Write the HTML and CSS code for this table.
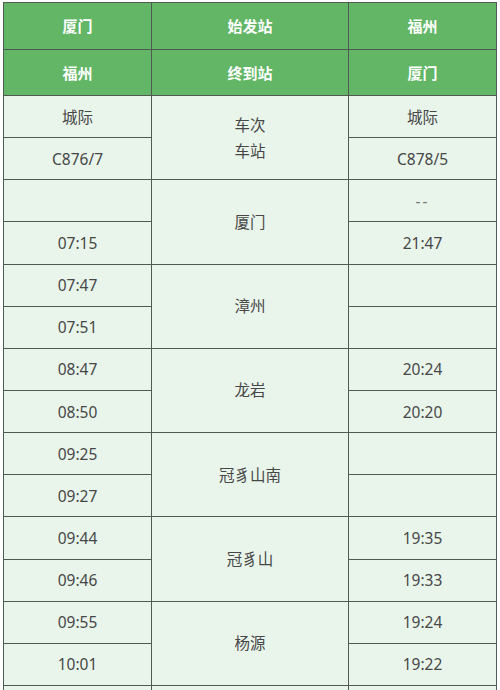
FILE: index.html
```html
<!DOCTYPE html>
<html lang="zh">
<head>
<meta charset="utf-8">
<link rel="stylesheet" href="styles.css">
</head>
<body>
<div class="wrap">
<table class="tt">
  <colgroup><col class="c1"><col class="c2"><col class="c3"></colgroup>
  <thead>
    <tr class="hr"><th>厦门</th><th>始发站</th><th>福州</th></tr>
    <tr class="hr"><th>福州</th><th>终到站</th><th>厦门</th></tr>
  </thead>
  <tbody>
    <tr><td>城际</td><td rowspan="2" class="st">车次<br>车站</td><td>城际</td></tr>
    <tr><td>C876/7</td><td>C878/5</td></tr>
    <tr><td></td><td rowspan="2" class="st">厦门</td><td class="dash">--</td></tr>
    <tr><td>07:15</td><td>21:47</td></tr>
    <tr><td>07:47</td><td rowspan="2" class="st">漳州</td><td></td></tr>
    <tr><td>07:51</td><td></td></tr>
    <tr><td>08:47</td><td rowspan="2" class="st">龙岩</td><td>20:24</td></tr>
    <tr><td>08:50</td><td>20:20</td></tr>
    <tr><td>09:25</td><td rowspan="2" class="st">冠豸山南</td><td></td></tr>
    <tr><td>09:27</td><td></td></tr>
    <tr><td>09:44</td><td rowspan="2" class="st">冠豸山</td><td>19:35</td></tr>
    <tr><td>09:46</td><td>19:33</td></tr>
    <tr><td>09:55</td><td rowspan="2" class="st">杨源</td><td>19:24</td></tr>
    <tr><td>10:01</td><td>19:22</td></tr>
    <tr class="tail"><td></td><td></td><td></td></tr>
  </tbody>
</table>
</div>
</body>
</html>
```

FILE: styles.css
```css
html, body {
  margin: 0;
  padding: 0;
  background: #ffffff;
}
.wrap {
  padding: 2px 0 0 3px;
  width: 493px;
}
.tt {
  width: 493px;
  border-collapse: collapse;
  table-layout: fixed;
  font-family: "Noto Sans", "Noto Sans CJK SC", sans-serif;
  font-size: 15.5px;
  color: #474747;
}
.c1 { width: 148px; }
.c2 { width: 197px; }
.c3 { width: 148px; }
.tt th, .tt td {
  border: 1px solid #4f5a52;
  text-align: center;
  vertical-align: middle;
  padding: 0;
}
.hr th {
  background: #62b666;
  color: #ffffff;
  font-weight: 700;
  height: 45.5px;
  font-size: 15px;
}
.tt td {
  background: #e9f5eb;
  height: 41.15px;
  line-height: 20px;
}
.tt td.st {
  line-height: 26px;
}
.tt td.dash {
  letter-spacing: 2px;
  color: #777;
}
```
